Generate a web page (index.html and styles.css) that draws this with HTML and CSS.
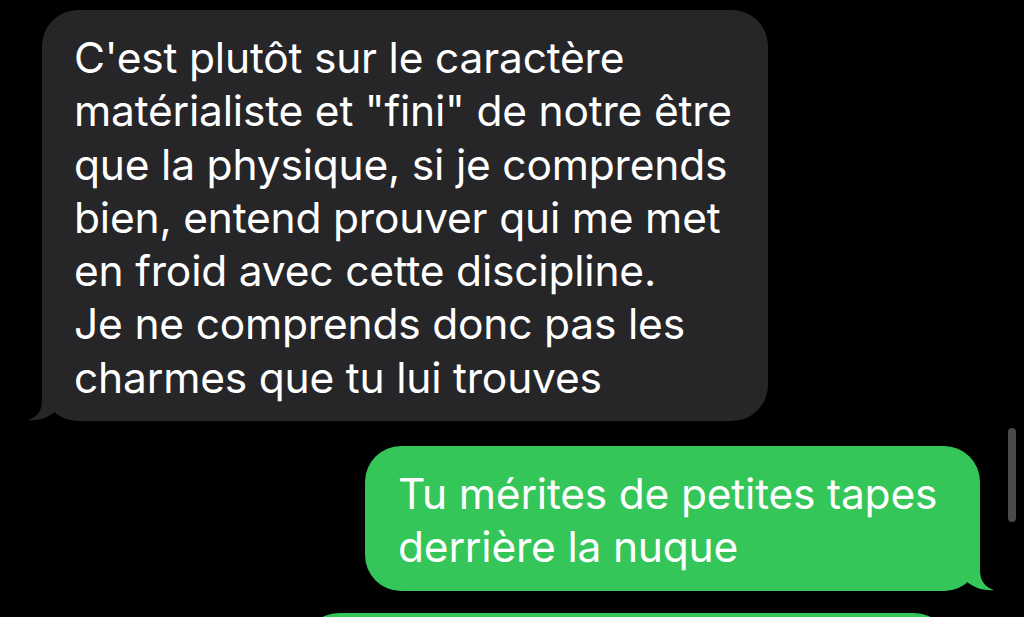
FILE: index.html
```html
<!DOCTYPE html>
<html lang="fr">
<head>
<meta charset="utf-8">
<link rel="stylesheet" href="styles.css">
</head>
<body>
<div class="thread">
  <div class="bubble received">
    <p class="text">C'est plutôt sur le caractère<br>matérialiste et "fini" de notre être<br>que la physique, si je comprends<br>bien, entend prouver qui me met<br>en froid avec cette discipline.<br>Je ne comprends donc pas les<br>charmes que tu lui trouves</p>
    <svg class="tail tail-left" width="44" height="44" viewBox="0 0 44 44"><path d="M16,0 L16,24 C16,34 10,41 2,43 C12,44 22,41 30,34 L40,20 L40,0 Z"/></svg>
  </div>
  <div class="bubble sent">
    <p class="text">Tu mérites de petites tapes<br>derrière la nuque</p>
    <svg class="tail tail-right" width="44" height="44" viewBox="0 0 44 44"><path d="M16,0 L16,24 C16,34 10,41 2,43 C12,44 22,41 30,34 L40,20 L40,0 Z"/></svg>
  </div>
  <div class="bubble sent next"></div>
</div>
<div class="scrollbar"></div>
</body>
</html>
```

FILE: styles.css
```css
html, body {
  margin: 0;
  padding: 0;
  background: #000;
  height: 617px;
  overflow: hidden;
}
body {
  font-family: Inter, "Noto Sans", sans-serif;
  color: #fff;
  position: relative;
}
.thread {
  display: flex;
  flex-direction: column;
  padding-top: 10px;
}
.bubble {
  position: relative;
  border-radius: 36px;
  box-sizing: border-box;
}
.text {
  margin: 0;
  font-size: 42.5px;
  line-height: 53.3px;
  letter-spacing: -0.2px;
  white-space: nowrap;
}
.received {
  background: #262628;
  margin-left: 42px;
  width: 726px;
  padding: 21px 20px 17px 32px;
}
.sent {
  background: #35c659;
  align-self: flex-end;
  margin-right: 44px;
  width: 615px;
  padding: 21px 20px 17px 33px;
  margin-top: 25px;
}
.sent.next {
  margin-top: 22px;
  margin-right: 74px;
  width: 647px;
  height: 80px;
}
.tail {
  position: absolute;
  bottom: 0;
}
.tail-left {
  left: -16px;
  fill: #262628;
}
.tail-right {
  right: -16px;
  fill: #35c659;
  transform: scaleX(-1);
}
.scrollbar {
  position: absolute;
  left: 1008px;
  top: 428px;
  width: 8px;
  height: 94px;
  border-radius: 4px;
  background: #4a4a4d;
}
```
